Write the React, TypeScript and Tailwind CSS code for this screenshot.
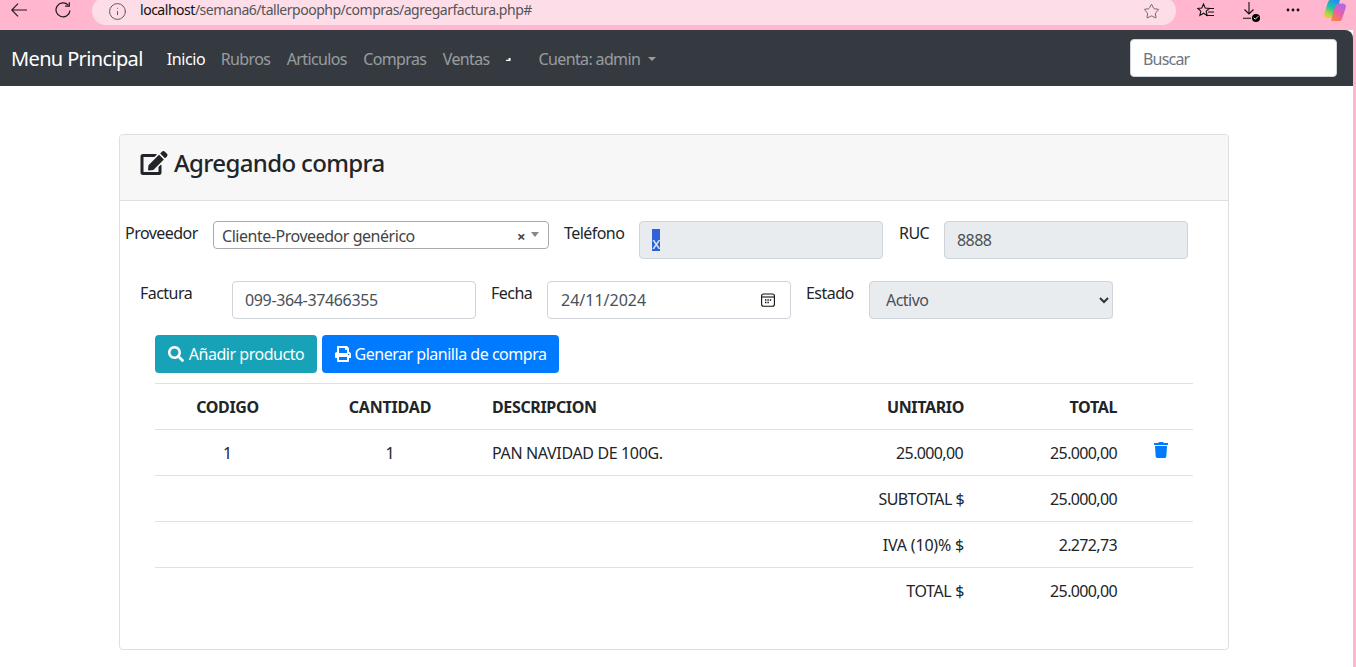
import { Info, Star, Check } from "lucide-react";
import { FaEdit, FaSearch, FaPrint, FaTrash } from "react-icons/fa";

const rows = [
  { codigo: "1", cantidad: "1", descripcion: "PAN NAVIDAD DE 100G.", unitario: "25.000,00", unitarioClass: "pr-[13px] tracking-[-0.04em]", total: "25.000,00", trash: true },
  { codigo: "", cantidad: "", descripcion: "", unitario: "SUBTOTAL $", unitarioClass: "tracking-[-0.035em]", total: "25.000,00", trash: false },
  { codigo: "", cantidad: "", descripcion: "", unitario: "IVA (10)% $", unitarioClass: "tracking-[-0.012em]", total: "2.272,73", trash: false },
  { codigo: "", cantidad: "", descripcion: "", unitario: "TOTAL $", unitarioClass: "", total: "25.000,00", trash: false },
];

const navLinks = ["Rubros", "Articulos", "Compras", "Ventas"];

function BackIcon() {
  return (
    <svg width="16" height="14" viewBox="0 0 16 14" fill="none" stroke="#1a1a1a" strokeWidth="1.1">
      <path d="M16 7H1M7 .7L.8 7 7 13.3" />
    </svg>
  );
}

function ReloadIcon() {
  return (
    <svg width="16" height="16" viewBox="0 0 16 16" fill="none" stroke="#1a1a1a" strokeWidth="1.2">
      <path d="M13.2 3.2A7 7 0 1 0 15 8.5" />
      <path d="M14.3 .2v4h-4.2" />
    </svg>
  );
}

function FavoritesIcon() {
  return (
    <svg width="17" height="16" viewBox="0 0 17 16" fill="none" stroke="#111" strokeWidth="1.1">
      <path d="M6.5 1l1.7 4 4.2.4-3.2 2.8.9 4.2-3.6-2.2-3.6 2.2.9-4.2L.6 5.4l4.2-.4z" />
      <path d="M12 5.5h5M11 9h6M9 12.5h8" />
    </svg>
  );
}

function DownloadIcon() {
  return (
    <div className="relative h-[19px] w-[17px]">
      <svg width="13" height="17" viewBox="0 0 13 17" fill="none" stroke="#111" strokeWidth="1.1">
        <path d="M6 0v12M1.5 7.5L6 12l4.5-4.5M0 16.3h8" />
      </svg>
      <span className="absolute right-0 bottom-[-1px] flex h-[8px] w-[8px] items-center justify-center rounded-full bg-black">
        <Check className="h-[6px] w-[6px] text-white" strokeWidth={4} />
      </span>
    </div>
  );
}

function DotsIcon() {
  return (
    <svg width="14" height="4" viewBox="0 0 14 4" fill="#111">
      <circle cx="2" cy="2" r="1.4" />
      <circle cx="7" cy="2" r="1.4" />
      <circle cx="12" cy="2" r="1.4" />
    </svg>
  );
}

function CopilotIcon() {
  return (
    <svg width="22" height="21" viewBox="0 0 22 21">
      <defs>
        <linearGradient id="cpA" x1="0.7" y1="0" x2="0.2" y2="1">
          <stop offset="0" stopColor="#1f8ff0" />
          <stop offset="0.45" stopColor="#25c2a0" />
          <stop offset="0.8" stopColor="#b6d53c" />
          <stop offset="1" stopColor="#f8c92e" />
        </linearGradient>
        <linearGradient id="cpB" x1="0.8" y1="0" x2="0.2" y2="1">
          <stop offset="0" stopColor="#a56bf0" />
          <stop offset="0.55" stopColor="#ec5fa8" />
          <stop offset="1" stopColor="#f5873a" />
        </linearGradient>
      </defs>
      <path d="M6 0h10l-4 14c-.6 2-2 4-4.5 4H3c-2 0-3.4-2-2.8-4L3 5C4 2 4.500 0 6 0z" fill="url(#cpA)" />
      <path d="M16 21H7l3.5-13c.6-2 2-4.5 4.5-4.5H19c2 0 3.4 2 2.8 4L19 16c-1 3-1.500 5-3 5z" fill="url(#cpB)" />
    </svg>
  );
}

function CalendarIcon() {
  return (
    <svg width="14" height="14" viewBox="0 0 14 14" fill="none" stroke="#111" strokeWidth="1.1">
      <rect x="0.6" y="1" width="12.8" height="12.2" rx="2" />
      <path d="M1 4h12" />
      <path d="M4 7h1.4M6.4 7h1.4M8.8 7h1.4M4 9.5h1.4M6.4 9.5h1.4" strokeWidth="1.3" />
    </svg>
  );
}

export default function App() {
  return (
    <div className="flex h-[667px] flex-col overflow-hidden bg-[#ffb6ce] tracking-[-0.022em] text-[#212529] [font-family:'Noto_Sans',sans-serif]">
      {/* Browser bar */}
      <div className="flex h-[30px] items-start">
        <div className="mt-[3px] ml-[11px]"><BackIcon /></div>
        <div className="mt-[2px] ml-[28px]"><ReloadIcon /></div>
        <div className="-mt-[3px] ml-[21px] flex h-[28px] w-[1084px] items-center rounded-[14px] bg-[#fddde8] pr-[16px] pl-[16px] text-[14px] tracking-[-0.034em]">
          <Info className="h-[19px] w-[19px] text-[#555]" strokeWidth={1.2} />
          <span className="mb-[3px] ml-[13px] text-[#111]">localhost</span>
          <span className="mb-[3px] text-[#555]">/semana6/tallerpoophp/compras/agregarfactura.php#</span>
          <Star className="mt-[1px] ml-auto h-[17px] w-[17px] text-[#555]" strokeWidth={1.2} />
        </div>
        <div className="mt-[3px] ml-[21px]"><FavoritesIcon /></div>
        <div className="mt-[2px] ml-[29px]"><DownloadIcon /></div>
        <div className="mt-[8px] ml-[26px]"><DotsIcon /></div>
        <div className="ml-[24px]"><CopilotIcon /></div>
      </div>

      <div className="mr-[3px] flex flex-1 flex-col bg-white">
        {/* Navbar */}
        <nav className="flex h-[56px] items-center rounded-tr-[8px] bg-[#343a40] pr-[16px] pl-[11px]">
          <div className="flex items-center pt-[2px] tracking-[-0.04em]">
            <span className="text-[20px] tracking-[-0.032em] text-white">Menu Principal</span>
            <span className="mr-[-1px] ml-[24px] tracking-[-0.025em] text-white">Inicio</span>
            {navLinks.map((link) => (
              <span key={link} className="ml-[16.5px] text-[#ffffff80]">{link}</span>
            ))}
            <span className="mt-[1px] ml-[16px] h-[3px] w-[5px] bg-white [clip-path:polygon(0_60%,60%_60%,60%_0,100%_0,100%_100%,0_100%)]" />
            <span className="ml-[28px] text-[#ffffff80]">Cuenta: admin</span>
            <span className="ml-[8px] h-0 w-0 border-x-[4.8px] border-t-[4.8px] border-x-transparent border-t-[#ffffff80]" />
          </div>
          <input
            placeholder="Buscar"
            className="ml-auto h-[38px] w-[207px] rounded-[4px] border border-[#ced4da] bg-white px-[12px] pt-[2px] text-[16px] tracking-[-0.05em] outline-none placeholder:text-[#6c757d]"
          />
        </nav>

        {/* Card */}
        <div className="mx-[119px] mt-[48px] mr-[124px] h-[516px] rounded-[4px] border border-[#dfdfdf]">
          <div className="flex h-[66px] items-center gap-[6px] rounded-t-[4px] border-b border-[#dfdfdf] bg-[#f7f7f7] pb-[10px] pl-[20px]">
            <FaEdit className="h-[24px] w-[28px]" />
            <h4 className="text-[24px] font-medium tracking-[-0.027em]">Agregando compra</h4>
          </div>

          <div className="flex h-[80px] items-start pt-[20px] pl-[5px] tracking-[-0.034em]">
            <label className="w-[88px]">Proveedor</label>
            <div className="flex h-[28px] w-[336px] items-center rounded-[4px] border border-[#aaa] pr-[9px] pl-[8px] text-[#444]">
              <span className="pt-[2px] tracking-[-0.029em]">Cliente-Proveedor genérico</span>
              <span className="ml-auto pt-[2px] text-[15px] font-bold">×</span>
              <span className="mt-[-1px] ml-[6px] h-0 w-0 border-x-[4px] border-t-[5px] border-x-transparent border-t-[#888]" />
            </div>
            <label className="ml-[15px] w-[75px]">Teléfono</label>
            <div className="flex h-[38px] w-[244px] items-center rounded-[4px] border border-[#ced4da] bg-[#e9ecef] px-[12px]">
              <span className="h-[22px] bg-[#2f62d6] leading-[28px] text-[#e9ecef]">x</span>
            </div>
            <label className="ml-[16px] w-[45px]">RUC</label>
            <div className="flex h-[38px] w-[244px] items-center rounded-[4px] border border-[#ced4da] bg-[#e9ecef] px-[12px] text-[#495057]">8888</div>
          </div>

          <div className="flex h-[54px] items-start pl-[20px] tracking-[-0.034em]">
            <label className="w-[92px]">Factura</label>
            <input
              readOnly
              value="099-364-37466355"
              className="h-[38px] w-[244px] rounded-[4px] border border-[#ced4da] px-[12px] tracking-[-0.022em] text-[#495057] outline-none"
            />
            <label className="ml-[15px] w-[56px]">Fecha</label>
            <div className="flex h-[38px] w-[244px] items-center justify-between rounded-[4px] border border-[#ced4da] pr-[15px] pl-[13px] text-[#495057]">
              <span className="tracking-[0em]">24/11/2024</span>
              <CalendarIcon />
            </div>
            <label className="ml-[15px] w-[63px]">Estado</label>
            <div className="relative h-[38px] w-[244px]">
              <select className="h-full w-full appearance-none rounded-[4px] border border-[#ced4da] bg-[#e9ecef] px-[16px] text-[#495057] outline-none">
                <option>Activo</option>
              </select>
              <svg className="pointer-events-none absolute top-[16px] right-[4px]" width="10" height="7" viewBox="0 0 10 7" fill="none" stroke="#333" strokeWidth="2">
                <path d="M1 1l4 4 4-4" />
              </svg>
            </div>
          </div>

          <div className="ml-[35px] flex gap-[5px] tracking-[-0.03em]">
            <button className="flex h-[38px] w-[162px] items-center justify-center gap-[5px] rounded-[4px] bg-[#17a2b8] text-white">
              <FaSearch className="h-[16px] w-[16px]" />
              Añadir producto
            </button>
            <button className="flex h-[38px] w-[237px] items-center justify-center gap-[4px] rounded-[4px] bg-[#007bff] text-white">
              <FaPrint className="h-[16px] w-[16px]" />
              Generar planilla de compra
            </button>
          </div>

          <table className="mt-[10px] ml-[35px] w-[1038px] table-fixed border-collapse">
            <thead>
              <tr className="h-[46px] border-y border-[#dee2e6] font-bold">
                <th className="w-[145px] text-center">CODIGO</th>
                <th className="w-[180px] text-center tracking-[-0.012em]">CANTIDAD</th>
                <th className="px-[12px] text-left">DESCRIPCION</th>
                <th className="w-[180px] px-[12px] text-right">UNITARIO</th>
                <th className="w-[154px] pr-[13px] pl-[12px] text-right">TOTAL</th>
                <th className="w-[63px]" />
              </tr>
            </thead>
            <tbody>
              {rows.map((row) => (
                <tr key={row.unitario} className="h-[46px] border-b border-[#dee2e6] last:border-b-0">
                  <td className="text-center">{row.codigo}</td>
                  <td className="text-center">{row.cantidad}</td>
                  <td className="px-[12px]">{row.descripcion}</td>
                  <td className={`px-[12px] text-right ${row.unitarioClass}`}>{row.unitario}</td>
                  <td className="pr-[13px] pl-[12px] text-right tracking-[-0.04em]">{row.total}</td>
                  <td className="pl-[23px] align-top">
                    {row.trash && <FaTrash className="mt-[12px] h-[16px] w-[16px] text-[#007bff]" />}
                  </td>
                </tr>
              ))}
            </tbody>
          </table>
        </div>
      </div>
    </div>
  );
}
